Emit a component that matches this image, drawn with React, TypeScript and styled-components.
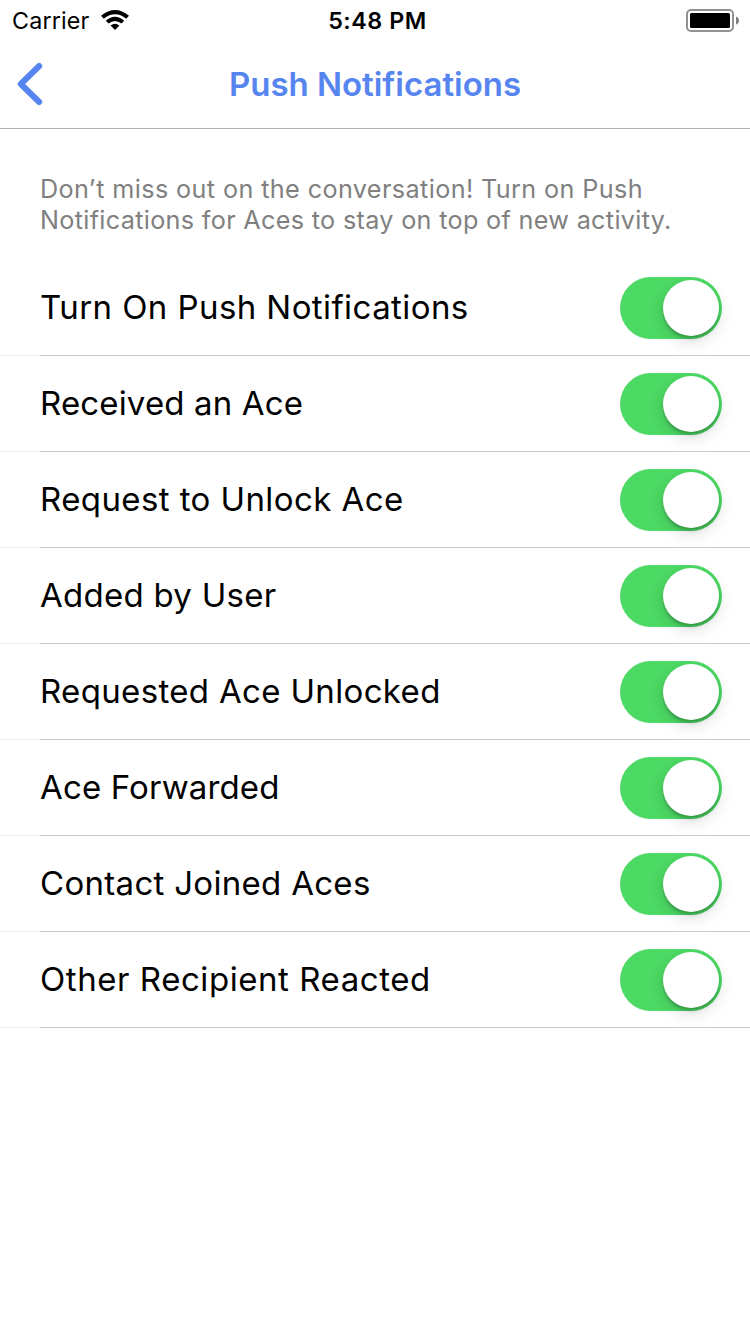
import React from "react";
import styled, { createGlobalStyle } from "styled-components";

const GlobalStyle = createGlobalStyle`
  * { box-sizing: border-box; }
  body { margin: 0; background: #fff; font-family: Inter, sans-serif; }
`;
const Screen = styled.main`
  width: 750px; height: 1334px; overflow: hidden; background: #fff;
`;
const StatusBar = styled.div`
  height: 40px; display: grid; grid-template-columns: 1fr auto 1fr;
  align-items: center; padding: 0 10px 0 12px; color: #000; font-size: 23.3px;
`;
const Carrier = styled.div`
  display: flex; align-items: center;
`;
const CarrierName = styled.span`
  width: 89px; letter-spacing: 0.15px;
`;
const Clock = styled.div`
  font-weight: 600; letter-spacing: 0.55px; padding-left: 3px;
`;
const Battery = styled.svg`
  justify-self: end; display: block;
`;
const NavBar = styled.header`
  height: 89px; border-bottom: 1px solid #b2b2b2; display: grid;
  grid-template-columns: 60px 1fr 60px; align-items: center;
`;
const BackIcon = styled.svg`
  display: block; margin-left: 16px;
`;
const Title = styled.h1`
  margin: 0; text-align: center; color: #5785f0; font-size: 33px; line-height: 40px;
  font-weight: 600; letter-spacing: -0.02px; white-space: nowrap;
`;
const Intro = styled.p`
  margin: 0; padding: 45px 40px 0; height: 131px; color: #808080;
  font-size: 25.2px; line-height: 31px; white-space: nowrap;
`;
const IntroLine = styled.span<{ $tracking: number }>`
  display: block; letter-spacing: ${(p) => p.$tracking}px;
`;
const Row = styled.div`
  height: 96px; display: grid; grid-template-columns: 40px 1fr;
`;
const Gutter = styled.div`
  border-bottom: 1px solid #f0f0f0;
`;
const RowBody = styled.div`
  display: flex; align-items: center; justify-content: space-between;
  padding-right: 28px; border-bottom: 1px solid #c8c7cc;
`;
const Label = styled.span<{ $tracking: number }>`
  font-size: 33px; line-height: 40px; letter-spacing: ${(p) => p.$tracking}px;
  white-space: nowrap; color: #000; padding-bottom: 2px;
  display: block;
`;
const Switch = styled.span`
  width: 102px; height: 62px; border-radius: 31px; background: #4cd964;
  display: flex; justify-content: flex-end; padding: 3px;
`;
const Knob = styled.span`
  width: 56px; height: 56px; border-radius: 50%; background: #fff;
  box-shadow: 0 6px 16px rgba(0,0,0,.13), 0 3px 3px rgba(0,0,0,.2);
`;

const settings = [
  { label: "Turn On Push Notifications", tracking: 0.42 },
  { label: "Received an Ace", tracking: 0.15 },
  { label: "Request to Unlock Ace", tracking: 0.41 },
  { label: "Added by User", tracking: 0.26 },
  { label: "Requested Ace Unlocked", tracking: 0.34 },
  { label: "Ace Forwarded", tracking: 0.13 },
  { label: "Contact Joined Aces", tracking: 0.3 },
  { label: "Other Recipient Reacted", tracking: 0.56 },
];

export default function App() {
  return (
    <Screen>
      <GlobalStyle />
      <StatusBar>
        <Carrier>
          <CarrierName>Carrier</CarrierName>
          <svg width="28" height="20" viewBox="0 0 28 20">
            <path d="M0 5.800Q14-5.800 28 5.800L25.200 8.700Q14-.2 2.800 8.700Z" />
            <path d="M4.800 10.700Q14 3 23.200 10.700L20.500 13.500Q14 8.300 7.500 13.500Z" />
            <path d="M9.600 15.400Q14 12 18.400 15.400L14 19.900Z" />
          </svg>
        </Carrier>
        <Clock>5:48 PM</Clock>
        <Battery width="54" height="24" viewBox="0 0 54 24">
          <rect x="1" y="2" width="46" height="21" rx="4" fill="none" stroke="#929292" strokeWidth="2" />
          <rect x="4" y="5" width="40" height="15" rx="1.500" />
          <path d="M50 8.500Q53 9.500 53 12.500T50 16.500Z" fill="#808080" />
        </Battery>
      </StatusBar>
      <NavBar>
        <BackIcon width="28" height="42" viewBox="0 0 28 42">
          <path d="M23.200 3 4.800 21 23.200 39" fill="none" stroke="#5785f0" strokeWidth="6" strokeLinecap="round" strokeLinejoin="round" />
        </BackIcon>
        <Title>Push Notifications</Title>
      </NavBar>
      <Intro>
        <IntroLine $tracking={0.39}>Don’t miss out on the conversation! Turn on Push</IntroLine>
        <IntroLine $tracking={0.32}>Notifications for Aces to stay on top of new activity.</IntroLine>
      </Intro>
      {settings.map(({ label, tracking }) => (
        <Row key={label}>
          <Gutter />
          <RowBody>
            <Label $tracking={tracking}>{label}</Label>
            <Switch role="switch" aria-checked="true" aria-label={label}><Knob /></Switch>
          </RowBody>
        </Row>
      ))}
    </Screen>
  );
}
